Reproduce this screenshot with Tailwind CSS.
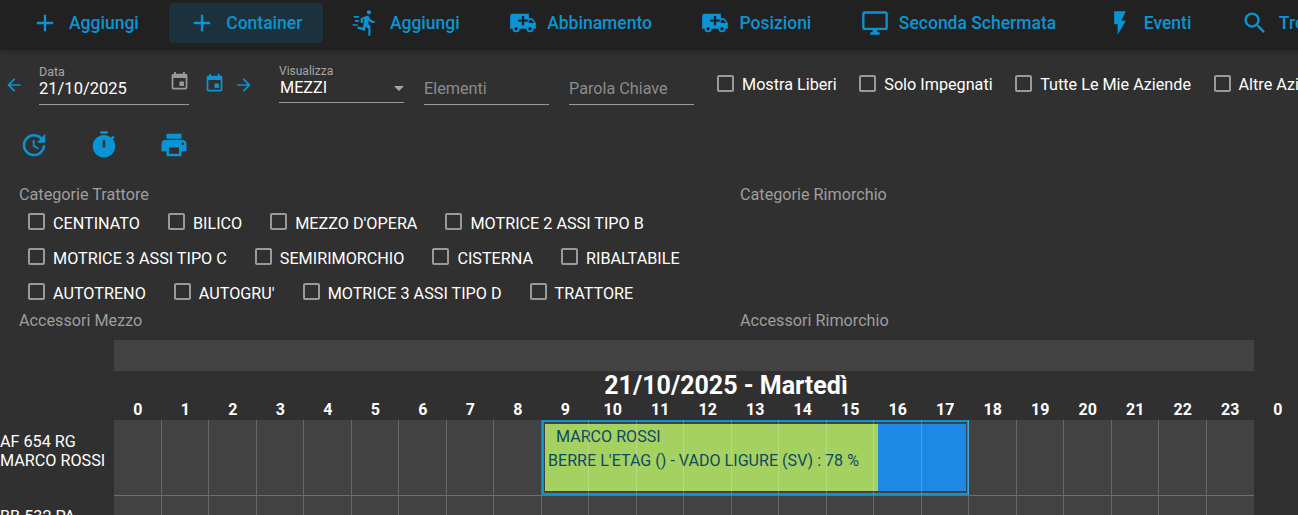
<!doctype html>
<html lang="en">
  <head>
    <meta charset="UTF-8" />
    <title>Pianificazione</title>
    <script src="https://cdn.jsdelivr.net/npm/@tailwindcss/browser@4"></script>
  </head>
  <body class="w-[1298px] h-[515px] overflow-hidden bg-[#303030] text-white font-['Roboto',sans-serif]">
    <!-- toolbar -->
    <nav class="h-[50px] bg-[#212121] flex items-start pl-3 w-[1500px] text-[#0a94d3] text-[17.5px] font-medium shadow-md">
      <a class="h-10 mt-[3px] px-[21px] mr-[9.5px] flex items-center gap-3 rounded">
        <svg class="w-7 h-7 -mx-0.5 fill-current" viewBox="0 0 24 24"><path d="M19 13h-6v6h-2v-6H5v-2h6V5h2v6h6v2z"/></svg>
        <span class="pt-px">Aggiungi</span>
      </a>
      <a class="h-10 mt-[3px] px-[21px] mr-[9.5px] flex items-center gap-3 rounded bg-[#1b323c]">
        <svg class="w-7 h-7 -mx-0.5 fill-current" viewBox="0 0 24 24"><path d="M19 13h-6v6h-2v-6H5v-2h6V5h2v6h6v2z"/></svg>
        <span class="pt-px">Container</span>
      </a>
      <a class="h-10 mt-[3px] px-[21px] mr-[9.5px] flex items-center gap-3 rounded">
        <svg class="w-7 h-7 -mx-0.5 fill-current" viewBox="0 0 24 24"><path d="M14.500 4.600c1 0 1.800-.8 1.800-1.800S15.500 1 14.500 1s-1.800.8-1.800 1.800.8 1.800 1.800 1.800zM11 18.900l.9-4 2.100 1.900V23h1.800v-8.400l-2-1.900.6-2.900c1.200 1.400 3 2.300 5 2.300v-1.800c-1.700 0-3.200-.9-4-2.200l-.9-1.500c-.4-.6-.9-.9-1.500-.9-.3 0-.5.1-.8.2L7.500 7.900V12h1.800V9l1.500-.6-1.500 7.500-4.400-.9-.4 1.800zM1.500 6H6v1.400H1.500zM2.500 9.500h3.500v1.400H2.500zM.5 13H5v1.400H.5z"/></svg>
        <span class="pt-px">Aggiungi</span>
      </a>
      <a class="h-10 mt-[3px] px-[21px] mr-[9.5px] flex items-center gap-3 rounded">
        <svg class="w-7 h-7 -mx-0.5 fill-current" viewBox="0 0 24 24"><path d="M18,18.500A1.500,1.500 0 0,1 16.500,17A1.500,1.500 0 0,1 18,15.500A1.500,1.500 0 0,1 19.500,17A1.500,1.500 0 0,1 18,18.500M19.500,9.500L21.460,12H17V9.500M6,18.500A1.500,1.500 0 0,1 4.500,17A1.500,1.500 0 0,1 6,15.500A1.500,1.500 0 0,1 7.500,17A1.500,1.500 0 0,1 6,18.500M20,8H17V4H3C1.890,4 1,4.890 1,6V17H3A3,3 0 0,0 6,20A3,3 0 0,0 9,17H15A3,3 0 0,0 18,20A3,3 0 0,0 21,17H23V12L20,8M16,11H13V14H11V11H8V9H11V6H13V9H16V11Z"/></svg>
        <span class="pt-px">Abbinamento</span>
      </a>
      <a class="h-10 mt-[3px] px-[21px] mr-[9.5px] flex items-center gap-3 rounded">
        <svg class="w-7 h-7 -mx-0.5 fill-current" viewBox="0 0 24 24"><path d="M18,18.500A1.500,1.500 0 0,1 16.500,17A1.500,1.500 0 0,1 18,15.500A1.500,1.500 0 0,1 19.500,17A1.500,1.500 0 0,1 18,18.500M19.500,9.500L21.460,12H17V9.500M6,18.500A1.500,1.500 0 0,1 4.500,17A1.500,1.500 0 0,1 6,15.500A1.500,1.500 0 0,1 7.500,17A1.500,1.500 0 0,1 6,18.500M20,8H17V4H3C1.890,4 1,4.890 1,6V17H3A3,3 0 0,0 6,20A3,3 0 0,0 9,17H15A3,3 0 0,0 18,20A3,3 0 0,0 21,17H23V12L20,8M16,11H13V14H11V11H8V9H11V6H13V9H16V11Z"/></svg>
        <span class="pt-px">Posizioni</span>
      </a>
      <a class="h-10 mt-[3px] px-[21px] mr-[9.5px] flex items-center gap-3 rounded">
        <svg class="w-7 h-7 -mx-0.5 fill-current" viewBox="0 0 24 24"><path d="M21 2H3c-1.100 0-2 .9-2 2v12c0 1.100.9 2 2 2h7v2H8v2h8v-2h-2v-2h7c1.100 0 2-.9 2-2V4c0-1.100-.9-2-2-2zm0 14H3V4h18v12z"/></svg>
        <span class="pt-px">Seconda Schermata</span>
      </a>
      <a class="h-10 mt-[3px] px-[21px] mr-[9.5px] flex items-center gap-3 rounded">
        <svg class="w-7 h-7 -mx-0.5 fill-current" viewBox="0 0 24 24"><path d="M7 2v11h3v9l7-12h-4l4-8z"/></svg>
        <span class="pt-px">Eventi</span>
      </a>
      <a class="h-10 mt-[3px] px-[21px] flex items-center gap-3 rounded">
        <svg class="w-7 h-7 -mx-0.5 fill-current" viewBox="0 0 24 24"><path d="M15.500 14h-.79l-.28-.27C15.410 12.590 16 11.110 16 9.500 16 5.910 13.090 3 9.500 3S3 5.910 3 9.500 5.910 16 9.500 16c1.610 0 3.090-.59 4.230-1.570l.27.28v.79l5 4.990L20.490 19l-4.990-5zm-6 0C7.010 14 5 11.990 5 9.500S7.010 5 9.500 5 14 7.010 14 9.500 11.990 14 9.500 14z"/></svg>
        <span class="pt-px">Trova</span>
      </a>
    </nav>

    <!-- filters -->
    <section class="h-[60px] flex items-start w-[1500px] text-[16.2px]">
      <svg class="w-5 h-5 ml-1 mt-[25px] fill-[#0a94d3]" viewBox="0 0 24 24"><path d="M20 11H7.830l5.590-5.590L12 4l-8 8 8 8 1.410-1.410L7.830 13H20v-2z"/></svg>
      <div class="relative w-[150px] h-[55px] ml-[15px] border-b border-[#9a9a9a]">
        <div class="absolute left-0 top-[16px] text-[12.5px] text-[#a6a6a6] leading-none">Data</div>
        <div class="absolute left-0 top-[30px] text-[16.5px] leading-[17px]">21/10/2025</div>
        <svg class="absolute left-[130px] top-[21px] w-[21px] h-[21px] fill-[#9a9a9a]" viewBox="0 0 24 24"><path d="M17 12h-5v5h5v-5zM16 1v2H8V1H6v2H5c-1.110 0-1.990.9-1.990 2L3 19c0 1.100.89 2 2 2h14c1.100 0 2-.9 2-2V5c0-1.100-.9-2-2-2h-1V1h-2zm3 18H5V8h14v11z"/></svg>
      </div>
      <svg class="w-[21px] h-[21px] ml-[15px] mt-[23px] fill-[#0a94d3]" viewBox="0 0 24 24"><path d="M17 12h-5v5h5v-5zM16 1v2H8V1H6v2H5c-1.110 0-1.990.9-1.990 2L3 19c0 1.100.89 2 2 2h14c1.100 0 2-.9 2-2V5c0-1.100-.9-2-2-2h-1V1h-2zm3 18H5V8h14v11z"/></svg>
      <svg class="w-5 h-5 ml-[9px] mt-[25px] fill-[#0a94d3]" viewBox="0 0 24 24"><path d="M12 4l-1.410 1.410L16.170 11H4v2h12.170l-5.580 5.590L12 20l8-8z"/></svg>
      <div class="relative w-[125px] h-[53px] ml-[25px] border-b border-[#9a9a9a]">
        <div class="absolute left-0 top-[15px] text-[12px] text-[#a6a6a6] leading-none">Visualizza</div>
        <div class="absolute left-[1px] top-[29px] leading-[17px]">MEZZI</div>
        <div class="absolute right-0 top-[36px] border-x-[5px] border-x-transparent border-t-[5px] border-t-[#a6a6a6]"></div>
      </div>
      <div class="relative w-[125px] h-[55px] ml-[20px] border-b border-[#9a9a9a] text-[#8c8c8c]">
        <div class="absolute left-0 top-[30px] leading-[17px]">Elementi</div>
      </div>
      <div class="relative w-[125px] h-[55px] ml-[20px] border-b border-[#9a9a9a] text-[#8c8c8c]">
        <div class="absolute left-0 top-[30px] leading-[17px]">Parola Chiave</div>
      </div>
      <div class="flex items-center gap-[22.5px] ml-[23px] mt-[23px]">
        <label class="flex items-center gap-2"><span class="w-[17px] h-[17px] mb-[3px] border-2 border-[#9a9a9a] rounded-[2px]"></span>Mostra Liberi</label>
        <label class="flex items-center gap-2"><span class="w-[17px] h-[17px] mb-[3px] border-2 border-[#9a9a9a] rounded-[2px]"></span>Solo Impegnati</label>
        <label class="flex items-center gap-2"><span class="w-[17px] h-[17px] mb-[3px] border-2 border-[#9a9a9a] rounded-[2px]"></span>Tutte Le Mie Aziende</label>
        <label class="flex items-center gap-2"><span class="w-[17px] h-[17px] mb-[3px] border-2 border-[#9a9a9a] rounded-[2px]"></span>Altre Aziende</label>
      </div>
    </section>

    <!-- actions -->
    <div class="flex mt-[20px] ml-[19px] gap-10 h-[30px]">
      <svg class="w-[30px] h-[30px] fill-[#0a94d3]" viewBox="0 0 24 24"><path d="M21 10.120h-6.780l2.740-2.820c-2.730-2.700-7.150-2.800-9.880-.1-2.730 2.710-2.730 7.080 0 9.790s7.150 2.710 9.880 0C18.320 15.650 19 14.080 19 12.100h2c0 1.980-.88 4.550-2.640 6.290-3.510 3.480-9.210 3.480-12.720 0-3.500-3.470-3.530-9.110-.02-12.580s9.140-3.470 12.650 0L21 3v7.120zM12.500 8v4.250l3.500 2.080-.72 1.210L11 13V8h1.500z"/></svg>
      <svg class="w-[30px] h-[30px] fill-[#0a94d3]" viewBox="0 0 24 24"><path fill-rule="evenodd" d="M15 1H9v2h6V1zm-4 13h2V8h-2v6zm8.030-6.610l1.420-1.420c-.43-.51-.9-.99-1.410-1.410l-1.420 1.420C16.070 4.740 14.120 4 12 4c-4.970 0-9 4.030-9 9s4.020 9 9 9 9-4.030 9-9c0-2.120-.74-4.070-1.970-5.610z"/></svg>
      <svg class="w-[30px] h-[30px] fill-[#0a94d3]" viewBox="0 0 24 24"><path d="M19 8H5c-1.660 0-3 1.340-3 3v6h4v4h12v-4h4v-6c0-1.660-1.340-3-3-3zm-3 11H8v-5h8v5zm3-7c-.55 0-1-.45-1-1s.45-1 1-1 1 .45 1 1-.45 1-1 1zm-1-9H6v4h12V3z"/></svg>
    </div>

    <!-- categories -->
    <div class="flex mt-[25px] text-[16.2px] text-[#9e9e9e] leading-[20px]">
      <div class="w-[740px] pl-[19px]">Categorie Trattore</div>
      <div>Categorie Rimorchio</div>
    </div>
    <div class="ml-[28px] mt-[8px] flex flex-col gap-[13px] text-[16.2px] leading-[20px]">
      <div class="flex gap-[28px]">
        <label class="flex items-center gap-2"><span class="w-[17px] h-[17px] mb-[5px] border-2 border-[#9a9a9a] rounded-[2px]"></span>CENTINATO</label>
        <label class="flex items-center gap-2"><span class="w-[17px] h-[17px] mb-[5px] border-2 border-[#9a9a9a] rounded-[2px]"></span>BILICO</label>
        <label class="flex items-center gap-2"><span class="w-[17px] h-[17px] mb-[5px] border-2 border-[#9a9a9a] rounded-[2px]"></span>MEZZO D'OPERA</label>
        <label class="flex items-center gap-2"><span class="w-[17px] h-[17px] mb-[5px] border-2 border-[#9a9a9a] rounded-[2px]"></span>MOTRICE 2 ASSI TIPO B</label>
      </div>
      <div class="flex gap-[28px]">
        <label class="flex items-center gap-2"><span class="w-[17px] h-[17px] mb-[5px] border-2 border-[#9a9a9a] rounded-[2px]"></span>MOTRICE 3 ASSI TIPO C</label>
        <label class="flex items-center gap-2"><span class="w-[17px] h-[17px] mb-[5px] border-2 border-[#9a9a9a] rounded-[2px]"></span>SEMIRIMORCHIO</label>
        <label class="flex items-center gap-2"><span class="w-[17px] h-[17px] mb-[5px] border-2 border-[#9a9a9a] rounded-[2px]"></span>CISTERNA</label>
        <label class="flex items-center gap-2"><span class="w-[17px] h-[17px] mb-[5px] border-2 border-[#9a9a9a] rounded-[2px]"></span>RIBALTABILE</label>
      </div>
      <div class="flex gap-[28px]">
        <label class="flex items-center gap-2"><span class="w-[17px] h-[17px] mb-[5px] border-2 border-[#9a9a9a] rounded-[2px]"></span>AUTOTRENO</label>
        <label class="flex items-center gap-2"><span class="w-[17px] h-[17px] mb-[5px] border-2 border-[#9a9a9a] rounded-[2px]"></span>AUTOGRU'</label>
        <label class="flex items-center gap-2"><span class="w-[17px] h-[17px] mb-[5px] border-2 border-[#9a9a9a] rounded-[2px]"></span>MOTRICE 3 ASSI TIPO D</label>
        <label class="flex items-center gap-2"><span class="w-[17px] h-[17px] mb-[5px] border-2 border-[#9a9a9a] rounded-[2px]"></span>TRATTORE</label>
      </div>
    </div>
    <div class="flex mt-[6px] text-[16.2px] text-[#9e9e9e] leading-[20px]">
      <div class="w-[740px] pl-[19px]">Accessori Mezzo</div>
      <div>Accessori Rimorchio</div>
    </div>

    <!-- timeline -->
    <div class="ml-[114px] mt-[9px] w-[1140px] h-[31px] bg-[#424242]"></div>
    <div class="ml-[114px] w-[1224px] text-center text-[25px] font-bold leading-[29px]">21/10/2025 - Martedì</div>
    <div class="ml-[114px] w-[1200px] grid grid-cols-[repeat(25,47.5px)] text-center text-[16px] font-bold leading-[20px]">
      <span>0</span><span>1</span><span>2</span><span>3</span><span>4</span><span>5</span><span>6</span><span>7</span><span>8</span><span>9</span><span>10</span><span>11</span><span>12</span><span>13</span><span>14</span><span>15</span><span>16</span><span>17</span><span>18</span><span>19</span><span>20</span><span>21</span><span>22</span><span>23</span><span>0</span>
    </div>
    <div class="flex">
      <div class="w-[114px] pt-[12px] text-[16.2px] leading-[19px] whitespace-nowrap">AF 654 RG<br />MARCO ROSSI</div>
      <div class="relative w-[1140px] h-[76px] bg-[#424242] border-b border-[#6e6e6e]">
        <div class="absolute left-[428px] top-0 w-[427px] h-[75px] border-2 border-[#0d93cf] pt-[1px] pb-[1px]">
          <div class="h-full flex border border-[#424242]">
            <div class="w-[333px] bg-[#a5d160] text-[#0f4a63] text-[16.1px] whitespace-nowrap">
              <div class="pl-[11px] pt-[3px] leading-[20px]">MARCO ROSSI</div>
              <div class="pl-[3px] pt-[4px] leading-[20px]">BERRE L'ETAG () - VADO LIGURE (SV) : 78 %</div>
            </div>
            <div class="flex-1 bg-[#1e88e5]"></div>
          </div>
        </div>
        <div class="absolute inset-0 grid grid-cols-[repeat(24,47.5px)]">
          <i class="border-r border-white/20"></i><i class="border-r border-white/20"></i><i class="border-r border-white/20"></i><i class="border-r border-white/20"></i><i class="border-r border-white/20"></i><i class="border-r border-white/20"></i><i class="border-r border-white/20"></i><i class="border-r border-white/20"></i><i class="border-r border-white/20"></i><i class="border-r border-white/20"></i><i class="border-r border-white/20"></i><i class="border-r border-white/20"></i><i class="border-r border-white/20"></i><i class="border-r border-white/20"></i><i class="border-r border-white/20"></i><i class="border-r border-white/20"></i><i class="border-r border-white/20"></i><i class="border-r border-white/20"></i><i class="border-r border-white/20"></i><i class="border-r border-white/20"></i><i class="border-r border-white/20"></i><i class="border-r border-white/20"></i><i class="border-r border-white/20"></i><i></i>
        </div>
        <div class="absolute left-[403px] top-0 bottom-0 w-px bg-[#7a2e2e]"></div>
      </div>
    </div>
    <div class="flex">
      <div class="w-[114px] pt-[11px] text-[16.2px] leading-[19px] whitespace-nowrap">BB 532 PA</div>
      <div class="relative w-[1140px] h-[76px] bg-[#424242]">
        <div class="absolute inset-0 grid grid-cols-[repeat(24,47.5px)]">
          <i class="border-r border-white/20"></i><i class="border-r border-white/20"></i><i class="border-r border-white/20"></i><i class="border-r border-white/20"></i><i class="border-r border-white/20"></i><i class="border-r border-white/20"></i><i class="border-r border-white/20"></i><i class="border-r border-white/20"></i><i class="border-r border-white/20"></i><i class="border-r border-white/20"></i><i class="border-r border-white/20"></i><i class="border-r border-white/20"></i><i class="border-r border-white/20"></i><i class="border-r border-white/20"></i><i class="border-r border-white/20"></i><i class="border-r border-white/20"></i><i class="border-r border-white/20"></i><i class="border-r border-white/20"></i><i class="border-r border-white/20"></i><i class="border-r border-white/20"></i><i class="border-r border-white/20"></i><i class="border-r border-white/20"></i><i class="border-r border-white/20"></i><i></i>
        </div>
        <div class="absolute left-[403px] top-0 bottom-0 w-px bg-[#7a2e2e]"></div>
      </div>
    </div>
  </body>
</html>
